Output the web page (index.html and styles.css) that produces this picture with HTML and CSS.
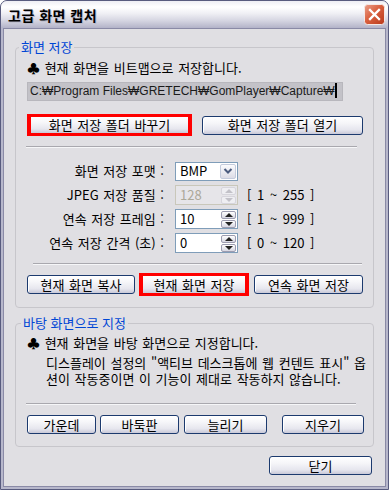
FILE: index.html
```html
<!DOCTYPE html>
<html lang="ko">
  <head>
    <meta charset="utf-8">
    <title>고급 화면 캡처</title>
    <link rel="stylesheet" href="styles.css">
  </head>
  <body>
    <div class="window">
      <div class="titlebar">
        <span class="title">고급 화면 캡처</span>
        <span class="closeBox">
          <svg width="21" height="21" viewBox="0 0 21 21">
            <defs>
              <linearGradient id="redGrad" x1="0" y1="0" x2="1" y2="1">
                <stop offset="0" stop-color="#eba08a"/>
                <stop offset="0.45" stop-color="#d9603f"/>
                <stop offset="1" stop-color="#b9391b"/>
              </linearGradient>
            </defs>
            <rect x="0.5" y="0.5" width="20" height="20" rx="3" fill="url(#redGrad)" stroke="#f4e8e6"/>
            <path d="M6 6 L15 15 M15 6 L6 15" stroke="#fff" stroke-width="2.3" stroke-linecap="square"/>
          </svg>
        </span>
      </div>
      <div class="frame">
        <div class="client">
          <fieldset class="group group1">
            <legend>화면 저장</legend>
            <p class="note">♣ 현재 화면을 비트맵으로 저장합니다.</p>
            <div class="pathBox">C:₩Program Files₩GRETECH₩GomPlayer₩Capture₩<span class="caret"></span></div>
            <div class="btnRow row1">
              <button class="btn marked changeBtn">화면 저장 폴더 바꾸기</button>
              <button class="btn openBtn">화면 저장 폴더 열기</button>
            </div>
            <hr class="sep sep1">
            <div class="form">
              <span class="label">화면 저장 포맷 :</span>
              <div class="combo">
                <span class="val">BMP</span>
                <span class="dropBtn">
                  <svg width="14" height="14" viewBox="0 0 14 14"><polyline points="3.5,5 7,8.5 10.5,5" fill="none" stroke="#4b5b7e" stroke-width="2"/></svg>
                </span>
              </div>
              <span></span>

              <span class="label">JPEG 저장 품질 :</span>
              <div class="spin disabled">
                <span class="val">128</span>
                <span class="arrows"><i class="up"></i><i class="down"></i></span>
              </div>
              <span class="range">[ 1 ~ 255 ]</span>

              <span class="label">연속 저장 프레임 :</span>
              <div class="spin">
                <span class="val">10</span>
                <span class="arrows"><i class="up"></i><i class="down"></i></span>
              </div>
              <span class="range">[ 1 ~ 999 ]</span>

              <span class="label">연속 저장 간격 (초) :</span>
              <div class="spin">
                <span class="val">0</span>
                <span class="arrows"><i class="up"></i><i class="down"></i></span>
              </div>
              <span class="range">[ 0 ~ 120 ]</span>
            </div>
            <hr class="sep sep2">
            <div class="btnRow row2">
              <button class="btn copyBtn">현재 화면 복사</button>
              <button class="btn marked saveBtn">현재 화면 저장</button>
              <button class="btn seqBtn">연속 화면 저장</button>
            </div>
          </fieldset>

          <fieldset class="group group2">
            <legend>바탕 화면으로 지정</legend>
            <p class="note">♣ 현재 화면을 바탕 화면으로 지정합니다.</p>
            <p class="desc">디스플레이 설정의 "액티브 데스크톱에 웹 컨텐트 표시" 옵<br>션이 작동중이면 이 기능이 제대로 작동하지 않습니다.</p>
            <hr class="sep sep3">
            <div class="btnRow row3">
              <button class="btn centerBtn">가운데</button>
              <button class="btn tileBtn">바둑판</button>
              <button class="btn stretchBtn">늘리기</button>
              <button class="btn clearBtn">지우기</button>
            </div>
          </fieldset>

          <div class="footer">
            <button class="btn closeBtn">닫기</button>
          </div>
        </div>
      </div>
    </div>
  </body>
</html>
```

FILE: styles.css
```css
* {
  box-sizing: border-box;
}
body {
  margin: 0;
  background: #fff;
  font-family: "Noto Sans CJK KR", "Noto Sans", sans-serif;
  font-size: 13px;
  color: #000;
}
.window {
  width: 389px;
  height: 490px;
  border: 1px solid #585b7e;
  border-radius: 7px 7px 0 0;
  background: #b7b7cb;
  display: flex;
  flex-direction: column;
  overflow: hidden;
}
.titlebar {
  flex: none;
  height: 27px;
  display: flex;
  align-items: center;
  justify-content: space-between;
  padding: 0 3px 0 7px;
  background: linear-gradient(#eeeef4 0, #ffffff 22%, #f0f0f5 45%, #d6d6e2 72%, #b3b3c8 100%);
}
.title {
  font-size: 14px;
  font-weight: bold;
  line-height: 16px;
  letter-spacing: 0.5px;
  text-shadow: 1px 1px 0 #b9b9c9;
}
.closeBox {
  width: 21px;
  height: 21px;
}
.closeBox svg {
  display: block;
}
.frame {
  flex: 1;
  padding: 0 2px 2px;
}
.client {
  height: 100%;
  background: #e0dfe3;
  border: 1px solid #8a8aa6;
  display: flex;
  flex-direction: column;
}

/* group boxes */
.group {
  margin: 11px 11px 0;
  padding: 0 0 11px;
  border: 1px solid #c7c6cb;
  border-radius: 4px;
  min-width: 0;
}
.group legend {
  margin-left: 3px;
  padding: 0 2px;
  color: #0046d5;
  line-height: 14px;
}
.group2 {
  margin-top: 8px;
  padding-bottom: 12px;
}
.group2 legend {
  margin-left: 5px;
}
.note {
  margin: 6px 0 0 11px;
  line-height: 16px;
  word-spacing: 1px;
}
.group2 .note {
  margin-top: 5px;
}
.desc {
  margin: 4px 0 0 30px;
  line-height: 16px;
  white-space: nowrap;
  word-spacing: 1px;
}
.pathBox {
  margin: 6px 0 0 11px;
  width: 316px;
  height: 19px;
  padding-left: 2px;
  background: #c3c2c8;
  border: 1px solid #b8b7bd;
  font-family: "Liberation Sans", "Noto Sans CJK KR", sans-serif;
  font-size: 12px;
  line-height: 17px;
  color: #1a1a1a;
  white-space: nowrap;
  overflow: hidden;
}
.caret {
  display: inline-block;
  width: 2px;
  height: 15px;
  background: #000;
  vertical-align: -3px;
}
.sep {
  border: 0;
  border-top: 1px solid #a9a8ae;
  border-bottom: 1px solid #f6f6f8;
  height: 2px;
}
.sep1 {
  margin: 10px 0 0 10px;
  width: 331px;
}
.sep2 {
  margin: 10px 0 0 17px;
  width: 329px;
}
.sep3 {
  margin: 16px 0 0 10px;
  width: 330px;
}

/* buttons */
.btnRow {
  display: flex;
  align-items: center;
  margin-left: 11px;
}
.row1 {
  margin-top: 13px;
}
.row2 {
  margin-top: 8px;
}
.row3 {
  margin-top: 10px;
}
.btn {
  height: 19px;
  padding: 0;
  border: 1px solid #1c3a6e;
  border-radius: 3px;
  background: linear-gradient(#ffffff 0, #f6f6f9 35%, #e6e6ee 75%, #c9c9d8 100%);
  box-shadow: inset 1px 1px 0 #fff;
  font: inherit;
  line-height: 16px;
  color: #000;
  word-spacing: 1px;
}
.btn.marked {
  border: 4px solid #ff0000;
  border-width: 3px 4px;
  border-radius: 0;
  box-shadow: none;
}
.changeBtn {
  width: 165px;
  height: 22px;
}
.openBtn {
  width: 161px;
  margin-left: 10px;
}
.copyBtn {
  width: 108px;
}
.saveBtn {
  width: 110px;
  height: 23px;
  margin-left: 4px;
}
.seqBtn {
  width: 109px;
  margin-left: 5px;
}
.centerBtn {
  width: 69px;
}
.tileBtn {
  width: 79px;
  margin-left: 4px;
}
.stretchBtn {
  width: 83px;
  margin-left: 5px;
}
.clearBtn {
  width: 82px;
  margin-left: 15px;
}
.footer {
  display: flex;
  justify-content: flex-end;
  margin: 9px 13px 0 0;
}
.closeBtn {
  width: 103px;
}

/* form */
.form {
  display: grid;
  grid-template-columns: 148px 74px auto;
  grid-auto-rows: 20px;
  row-gap: 4px;
  align-items: center;
  margin-top: 13px;
}
.label {
  text-align: right;
  line-height: 16px;
  white-space: nowrap;
  word-spacing: 1px;
}
.combo,
.spin {
  margin-left: 11px;
  height: 20px;
  border: 1px solid #7f9db9;
  background: #fff;
  display: flex;
  align-items: center;
  justify-content: space-between;
  padding: 0 1px 0 4px;
}
.combo {
  height: 19px;
}
.val {
  line-height: 16px;
}
.dropBtn {
  width: 16px;
  height: 15px;
  border: 1px solid #c4cbdc;
  border-radius: 2px;
  background: linear-gradient(#fbfbfd, #dcdce6);
  display: flex;
  align-items: center;
  justify-content: center;
}
.arrows {
  display: flex;
  flex-direction: column;
  gap: 1px;
}
.arrows i {
  display: block;
  width: 15px;
  height: 8px;
  border: 1px solid #9c9cb0;
  border-radius: 2px;
  background: linear-gradient(#ffffff, #d7d7e2);
  position: relative;
}
.arrows i::after {
  content: "";
  position: absolute;
  left: 3px;
  width: 0;
  height: 0;
  border-left: 4px solid transparent;
  border-right: 4px solid transparent;
}
.arrows .up::after {
  top: 1px;
  border-bottom: 4px solid #222;
}
.arrows .down::after {
  top: 1px;
  border-top: 4px solid #222;
}
.spin.disabled {
  background: #e6e5e9;
  border-color: #c9c7ba;
  color: #aca899;
}
.spin.disabled .arrows i {
  border-color: #d6d5dc;
  background: #eeeef2;
}
.spin.disabled .arrows .up::after {
  border-bottom-color: #c2c1c8;
}
.spin.disabled .arrows .down::after {
  border-top-color: #c2c1c8;
}
.range {
  margin-left: 9px;
  line-height: 16px;
  white-space: nowrap;
  word-spacing: 2px;
}
```
